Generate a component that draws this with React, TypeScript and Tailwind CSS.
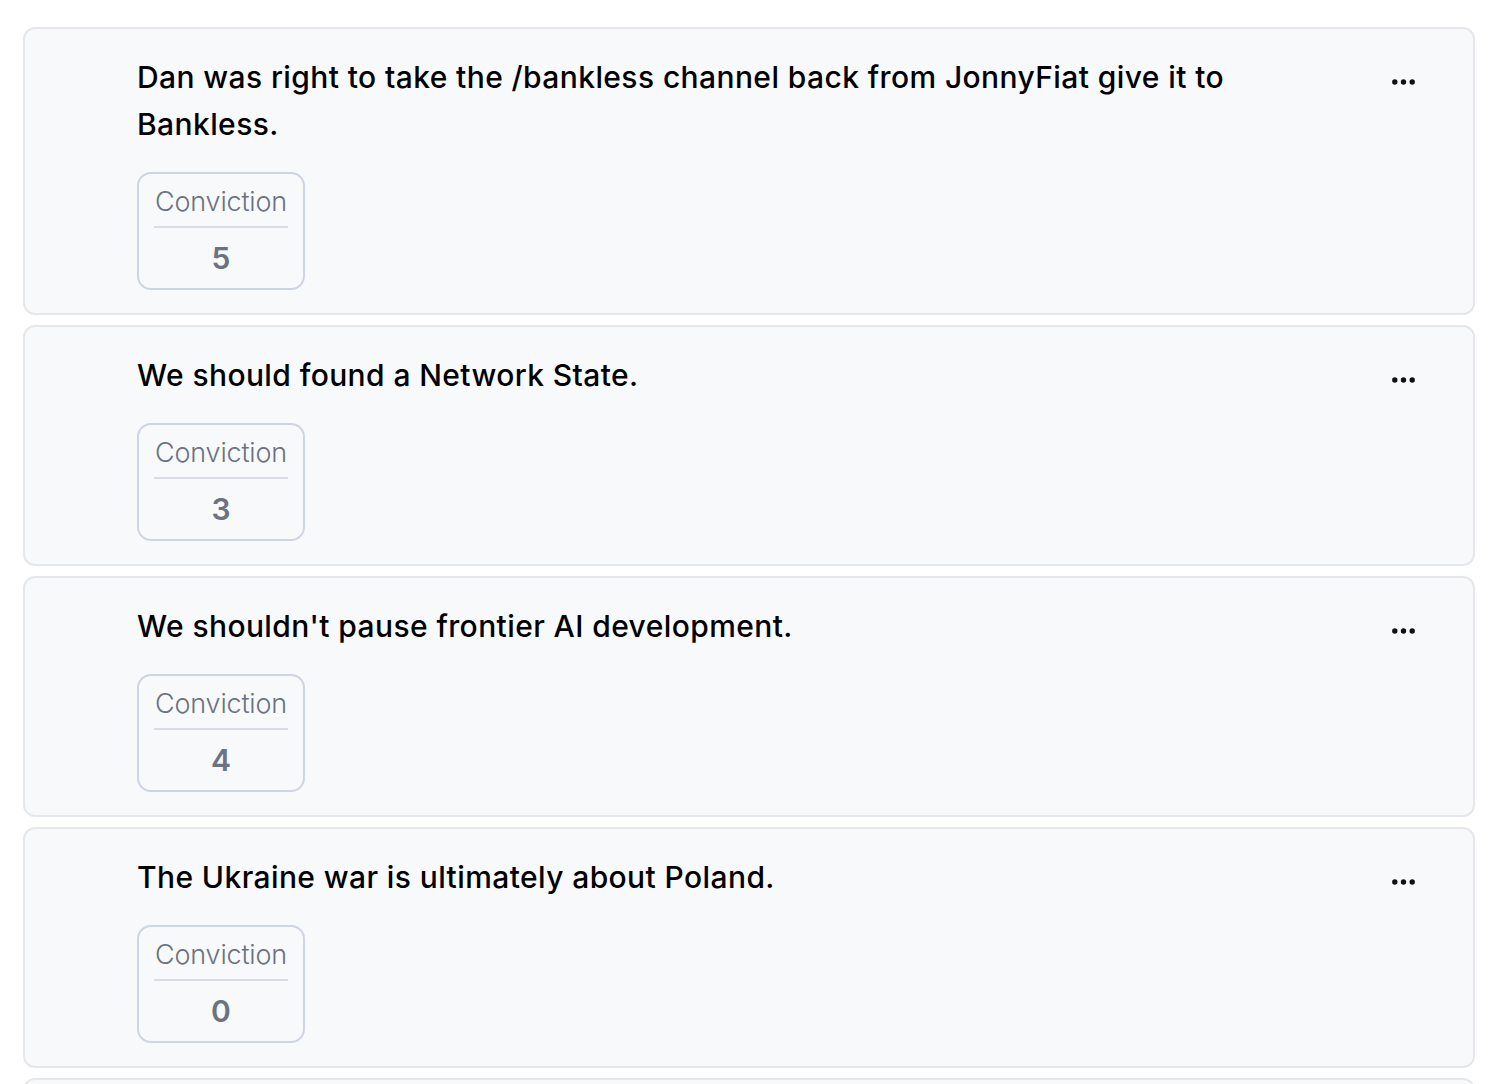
import React from "react";

const items = [
  { text: "Dan was right to take the /bankless channel back from JonnyFiat give it to Bankless.", value: 5 },
  { text: "We should found a Network State.", value: 3 },
  { text: "We shouldn't pause frontier AI development.", value: 4 },
  { text: "The Ukraine war is ultimately about Poland.", value: 0 },
  { text: "", value: 0 },
];

function Dots() {
  return (
    <svg width="23" height="6" viewBox="0 0 23 6" className="block">
      <circle cx="2.8" cy="3" r="2.7" fill="#111" />
      <circle cx="11.5" cy="3" r="2.7" fill="#111" />
      <circle cx="20.2" cy="3" r="2.7" fill="#111" />
    </svg>
  );
}

function Card({ text, value }: { text: string; value: number }) {
  return (
    <div className="rounded-[12px] border-2 border-[#e5e7eb] bg-[#f8f9fb] pl-[112px] pr-[58px] pt-[25px] pb-[23px] flex items-start">
      <div className="flex-1 min-w-0">
        <div className="text-[30px] leading-[47px] font-medium tracking-[0.4px] text-black max-w-[1110px] min-h-[47px]">{text}</div>
        <div className="mt-[24px] w-[168px] rounded-[14px] border-2 border-[#cdd5e1] px-[15px] pt-[8px] pb-[10px] flex flex-col items-center">
          <div className="text-[27px] leading-[40px] font-light tracking-[-0.2px] text-[#6b7280] w-full text-center border-b-2 border-[#d8dde5] pb-[4px]">Conviction</div>
          <div className="text-[30px] leading-[40px] font-semibold text-[#6b7280] pt-[10px]">{value}</div>
        </div>
      </div>
      <div className="pt-[25px]">
        <Dots />
      </div>
    </div>
  );
}

export default function App() {
  return (
    <div className="min-h-screen bg-white pl-[23px] pr-[21px] pt-[27px] flex flex-col gap-[10px]" style={{ fontFamily: "Inter, 'Noto Sans', sans-serif" }}>
      {items.map((it, i) => (
        <Card key={i} text={it.text} value={it.value} />
      ))}
    </div>
  );
}
